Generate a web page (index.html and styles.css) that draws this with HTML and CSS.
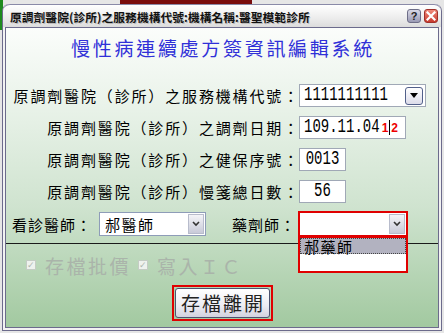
FILE: index.html
```html
<!DOCTYPE html>
<html lang="zh-Hant">
<head>
    <meta charset="UTF-8">
    <title>慢性病連續處方簽資訊編輯系統</title>
    <link rel="stylesheet" href="styles.css">
</head>
<body>
    <div class="desk">
        <div class="desk-strip"></div>
        <div class="desk-side"></div>
        <div class="window">
            <div class="titlebar">
                <span class="title">原調劑醫院(診所)之服務機構代號:機構名稱:醫聖模範診所</span>
                <span class="tb-buttons">
                    <span class="tb-btn tb-help">?</span>
                    <span class="tb-btn tb-close">
                        <svg width="10" height="10" viewBox="0 0 10 10"><path d="M1.5 1.5 L8.5 8.5 M8.5 1.5 L1.5 8.5" stroke="#fff" stroke-width="2.2" stroke-linecap="square"/></svg>
                    </span>
                </span>
            </div>
            <div class="client">
                <h1>慢性病連續處方簽資訊編輯系統</h1>
                <div class="form-grid">
                    <label class="row-label">原調劑醫院（診所）之服務機構代號：</label>
                    <div class="field field-wide">
                        <span class="num">1111111111</span>
                        <span class="combo-btn">
                            <svg width="10" height="6" viewBox="0 0 10 6"><path d="M1 0 H9 L5 5 Z" fill="#000"/></svg>
                        </span>
                    </div>
                    <label class="row-label">原調劑醫院（診所）之調劑日期：</label>
                    <div class="field field-date">
                        <span class="num">109.11.04</span>
                        <span class="spin">1<i class="caret"></i>2</span>
                    </div>
                    <label class="row-label">原調劑醫院（診所）之健保序號：</label>
                    <div class="field field-small"><span class="num">0013</span></div>
                    <label class="row-label">原調劑醫院（診所）慢箋總日數：</label>
                    <div class="field field-small"><span class="num">56</span></div>
                </div>
                <div class="staff-row">
                    <span class="staff-label doctor-label">看診醫師：</span>
                    <div class="select doctor-select">
                        <span class="select-text">郝醫師</span>
                        <span class="select-btn">
                            <svg width="8" height="6" viewBox="0 0 8 6"><path d="M1 1 L4 4 L7 1" fill="none" stroke="#333" stroke-width="1.6"/></svg>
                        </span>
                    </div>
                    <span class="staff-label pharm-label">藥劑師：</span>
                    <div class="pharm-wrap">
                        <div class="select pharm-select">
                            <span class="select-text"></span>
                            <span class="select-btn">
                                <svg width="8" height="6" viewBox="0 0 8 6"><path d="M1 1 L4 4 L7 1" fill="none" stroke="#333" stroke-width="1.6"/></svg>
                            </span>
                        </div>
                        <div class="dropdown">
                            <div class="dropdown-item active">郝藥師</div>
                        </div>
                    </div>
                </div>
                <div class="divider"></div>
                <div class="checks">
                    <span class="check"><span class="check-box">✓</span>存檔批價</span>
                    <span class="check"><span class="check-box">✓</span>寫入ＩＣ</span>
                </div>
                <div class="actions">
                    <div class="focus-ring">
                        <button class="save-btn">存檔離開</button>
                    </div>
                </div>
            </div>
        </div>
    </div>
</body>
</html>
```

FILE: styles.css
```css
body {
    margin: 0;
    background: #e6e6e6;
    font-family: "Noto Sans CJK TC", "Noto Sans", sans-serif;
}
.desk {
    position: relative;
    width: 444px;
    height: 333px;
    overflow: hidden;
    padding-top: 4px;
    box-sizing: border-box;
}
.desk-strip {
    position: absolute;
    left: 120px;
    top: 0;
    width: 132px;
    height: 5px;
    background: #7a0d0d;
}
.desk-side {
    position: absolute;
    left: 0;
    top: 0;
    width: 3px;
    height: 30px;
    background: #1e8a1e;
}
.window {
    position: relative;
    margin-left: 2px;
    width: 440px;
    height: 327px;
    box-sizing: border-box;
    border: 1px solid #6c6b8c;
    border-top: none;
    border-radius: 7px 7px 0 0;
    background: #f2f2f2;
    padding: 0 2px 2px 2px;
    display: flex;
    flex-direction: column;
}
.titlebar {
    height: 22px;
    display: flex;
    align-items: center;
    justify-content: space-between;
    background: linear-gradient(#ffffff, #ececec 60%, #dcdcdc);
    border-top: 1px solid #8a8aa8;
    border-radius: 7px 7px 0 0;
    margin: 0 -2px;
    padding: 0 3px 0 7px;
}
.title {
    font-size: 11.7px;
    font-weight: 700;
    letter-spacing: 0.1px;
    color: #111;
    text-shadow: 1px 1px 0 rgba(0, 0, 0, 0.2);
    white-space: nowrap;
}
.tb-buttons {
    display: flex;
    gap: 3px;
}
.tb-btn {
    width: 14px;
    height: 14px;
    border-radius: 3px;
    display: flex;
    align-items: center;
    justify-content: center;
    box-sizing: border-box;
}
.tb-help {
    background: linear-gradient(#d8d8e6, #9a9ab4);
    border: 1px solid #6e6e88;
    font: bold 11px "Liberation Sans", sans-serif;
    color: #222;
}
.tb-close {
    background: linear-gradient(#f08a7a, #c83a2e);
    border: 1px solid #a0302a;
}
.client {
    flex: 1;
    border: 1px solid #6c6b8c;
    background: linear-gradient(#fbfdfb, #eaf3ea 25%, #cfe3cf 60%, #a2c9a0);
    display: flex;
    flex-direction: column;
}
h1 {
    margin: 8px 0 0;
    font-size: 19px;
    line-height: 24px;
    font-weight: 400;
    letter-spacing: 2.7px;
    color: #3030d8;
    text-align: center;
    padding-left: 2px;
}
.form-grid {
    margin-top: 24px;
    display: grid;
    grid-template-columns: 288px auto;
    column-gap: 5px;
    row-gap: 9px;
}
.row-label {
    font-size: 15px;
    line-height: 23px;
    letter-spacing: 1.85px;
    text-align: right;
    color: #000;
    white-space: nowrap;
    margin-right: -6px;
}
.field {
    height: 23px;
    box-sizing: border-box;
    border: 1px solid #a0a8b6;
    background: #fff;
    display: flex;
    align-items: center;
    padding-left: 4px;
}
.num {
    display: inline-block;
    font-family: "Liberation Mono", monospace;
    font-size: 14px;
    line-height: 15px;
    transform: scaleY(1.4);
    color: #000;
}
.field-wide {
    width: 127px;
    justify-content: space-between;
    padding-right: 2px;
}
.combo-btn {
    width: 18px;
    height: 18px;
    box-sizing: border-box;
    border: 1px solid #52608a;
    border-radius: 3px;
    background: linear-gradient(#ffffff, #dcdcea);
    display: flex;
    align-items: center;
    justify-content: center;
}
.field-date {
    width: 107px;
}
.spin {
    margin-left: 2px;
    font: bold 12px "Liberation Sans", sans-serif;
    color: #ee0000;
    display: flex;
    align-items: center;
}
.caret {
    display: inline-block;
    width: 1px;
    height: 15px;
    background: #000;
    margin: 0 1px;
}
.field-small {
    width: 47px;
    justify-content: center;
    padding-left: 0;
}
.staff-row {
    margin-top: 9px;
    height: 24px;
    display: flex;
    align-items: center;
    padding-left: 6px;
}
.staff-label {
    font-size: 15px;
    letter-spacing: 1px;
    color: #000;
}
.doctor-label {
    width: 87px;
}
.pharm-label {
    margin-left: 26px;
    width: 66px;
}
.select {
    height: 24px;
    box-sizing: border-box;
    background: #fff;
    display: flex;
    align-items: center;
    justify-content: space-between;
    padding: 1px 1px 1px 5px;
}
.doctor-select {
    width: 107px;
    border: 1px solid #8e9cb8;
}
.select-text {
    font-size: 15px;
    letter-spacing: 1.5px;
    color: #000;
}
.select-btn {
    width: 16px;
    height: 20px;
    box-sizing: border-box;
    border: 1px solid #b8bccc;
    background: linear-gradient(#f4f4f8, #c8cad8);
    display: flex;
    align-items: center;
    justify-content: center;
}
.pharm-wrap {
    position: relative;
}
.pharm-select {
    width: 110px;
    height: 26px;
    border: 2px solid #e00000;
}
.dropdown {
    position: absolute;
    left: 0;
    top: 25px;
    width: 110px;
    height: 37px;
    box-sizing: border-box;
    border: 2px solid #e00000;
    background: #fff;
    z-index: 2;
}
.dropdown-item {
    height: 16px;
    line-height: 15px;
    font-size: 15px;
    letter-spacing: 1.5px;
    padding-left: 3px;
    color: #000;
    box-sizing: border-box;
}
.dropdown-item.active {
    background: #b2b2c0;
    border: 1px dotted #444;
}
.divider {
    margin-top: 7px;
    height: 1px;
    background: #1a1a1a;
}
.checks {
    margin-top: 10px;
    height: 22px;
    display: flex;
    align-items: center;
    padding-left: 20px;
    gap: 7px;
}
.check {
    display: flex;
    align-items: center;
    font-size: 19px;
    letter-spacing: 2.5px;
    color: #aab4aa;
}
.check-box {
    width: 10px;
    height: 10px;
    box-sizing: border-box;
    border: 1px solid #c4ccc4;
    background: #eef2ee;
    font: 9px "DejaVu Sans", sans-serif;
    line-height: 8px;
    color: #b0b8b0;
    text-align: center;
    margin-right: 9px;
}
.actions {
    margin-top: 9px;
    display: flex;
    justify-content: center;
}
.focus-ring {
    border: 2px solid #e00000;
    width: 101px;
    height: 36px;
    box-sizing: border-box;
    padding: 1px;
}
.save-btn {
    width: 100%;
    height: 100%;
    border: 1px solid #4c5270;
    border-radius: 3px;
    background: linear-gradient(#ffffff, #ececf2 60%, #d2d2de);
    font-family: "Noto Sans CJK TC", sans-serif;
    font-size: 19px;
    letter-spacing: 2px;
    color: #222;
    padding: 0 0 0 2px;
    line-height: 28px;
}
```
